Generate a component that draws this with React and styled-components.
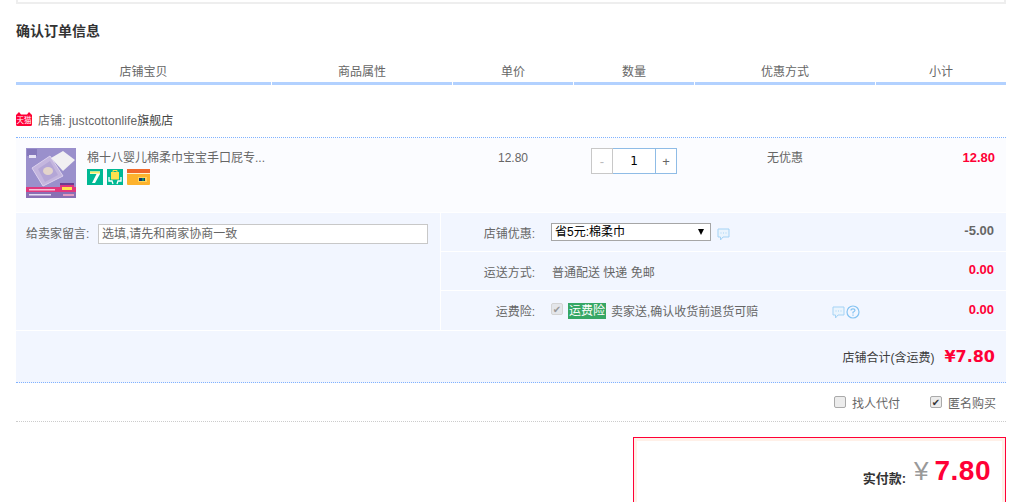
import React from 'react';
import styled, { createGlobalStyle } from 'styled-components';

const GlobalStyle = createGlobalStyle`
    html, body {
        margin: 0;
        height: 502px;
        overflow: hidden;
        background: #fff;
    }
    body {
        font-family: "Liberation Sans", "Noto Sans CJK SC", sans-serif;
        font-size: 12px;
        color: #666;
    }
`;

const Page = styled.div`
    width: 990px;
    margin-left: 16px;
`;

const TopStrip = styled.div`
    height: 2px;
    border: 2px solid #eee;
    border-top: none;
`;

const Title = styled.h2`
    margin: 0;
    padding-top: 16px;
    height: 38px;
    line-height: 22px;
    font-size: 14px;
    font-weight: bold;
    color: #333;
    box-sizing: content-box;
`;

const HeadRow = styled.div`
    display: flex;
    gap: 1px;
    margin-top: 4px;
`;

const HeadCell = styled.div`
    width: ${p => p.$w}px;
    height: 20px;
    line-height: 20px;
    text-align: center;
    color: #666;
    border-bottom: 3px solid #b2d1ff;
`;

const ShopRow = styled.div`
    display: flex;
    align-items: center;
    height: 53px;
    padding-top: 17px;
    padding-bottom: 1px;
    box-sizing: border-box;
    border-bottom: 1px dotted #80b2ff;
    color: #444;
`;

const ShopName = styled.span`
    margin-left: 6px;
    span { color: #666; letter-spacing: 0.1px; }
`;

const ProductRow = styled.div`
    display: flex;
    height: 74px;
    background: #fbfcff;
`;

const ProductCell = styled.div`
    width: ${p => p.$w}px;
    margin-left: ${p => p.$ml || 0}px;
    padding-top: 10px;
    padding-right: ${p => p.$pr || 0}px;
    box-sizing: border-box;
    text-align: ${p => p.$align || 'center'};
    color: #666;
    line-height: 20px;
`;

const SubTotal = styled.span`
    font-size: 13px;
    font-weight: bold;
    color: #ff0036;
`;

const GoodsCell = styled.div`
    display: flex;
    width: 437px;
    padding: 10px 0 0 10px;
    box-sizing: border-box;
`;

const GoodsInfo = styled.div`
    margin-left: 11px;
`;

const GoodsTitle = styled.div`
    line-height: 20px;
    color: #666;
`;

const BadgeRow = styled.div`
    display: flex;
    gap: 4px;
    margin-top: 1px;
`;

const Stepper = styled.div`
    display: flex;
    width: 86px;
    height: 26px;
    margin: 0 auto;
`;

const StepButton = styled.button`
    width: 22px;
    padding: 0;
    border: 1px solid ${p => p.$disabled ? '#c8c8c8' : '#8fbce6'};
    background: #fff;
    color: ${p => p.$disabled ? '#bbb' : '#666'};
    font: 13px "Liberation Sans", sans-serif;
`;

const StepInput = styled.input`
    width: 42px;
    padding: 0;
    box-sizing: border-box;
    border: 1px solid #8fbce6;
    border-left: none;
    border-right: none;
    background: #fff;
    text-align: center;
    color: #000;
    font: 12px "DejaVu Sans", sans-serif;
    outline: none;
`;

const InfoBlock = styled.div`
    display: flex;
    margin-top: 1px;
    background: #f2f6ff;
`;

const MemoPanel = styled.div`
    display: flex;
    align-items: flex-start;
    width: 425px;
    padding: 11px 0 0 10px;
    box-sizing: border-box;
    border-right: 1px solid #fff;
`;

const MemoLabel = styled.label`
    width: 72px;
    line-height: 20px;
    color: #666;
`;

const MemoInput = styled.input`
    width: 330px;
    height: 20px;
    padding: 0 3px;
    box-sizing: border-box;
    border: 1px solid #c8c8c8;
    background: #fff;
    font: 12px "Liberation Sans", "Noto Sans CJK SC", sans-serif;
    color: #666;
    outline: none;
    &::placeholder { color: #666; opacity: 1; }
`;

const OptionsPanel = styled.div`
    flex: 1;
`;

const OptionRow = styled.div`
    display: flex;
    align-items: center;
    height: 39px;
    padding-right: 12px;
    box-sizing: border-box;
    border-bottom: ${p => p.$last ? 'none' : '1px solid #fff'};
`;

const OptionLabel = styled.div`
    width: 95px;
    padding-right: 1px;
    box-sizing: border-box;
    text-align: right;
    color: #666;
`;

const OptionValue = styled.div`
    flex: 1;
    display: flex;
    align-items: center;
    margin-left: 15px;
    color: #666;
`;

const PlainValue = styled.span`
    margin-left: 1px;
`;

const Amount = styled.div`
    font-size: 13px;
    font-weight: bold;
    color: ${p => p.$muted ? '#666' : '#ff0036'};
    margin-top: -3px;
`;

const SelectWrap = styled.div`
    position: relative;
    width: 160px;
    height: 18px;
    &::after {
        content: "";
        position: absolute;
        right: 7px;
        top: 6px;
        border-left: 3.5px solid transparent;
        border-right: 3.5px solid transparent;
        border-top: 6px solid #000;
    }
`;

const CouponSelect = styled.select`
    appearance: none;
    display: block;
    width: 100%;
    height: 100%;
    padding: 0 3px;
    box-sizing: border-box;
    border: 1px solid #a6a6a6;
    border-radius: 0;
    background: #fff;
    color: #000;
    font: 12px "Liberation Sans", "Noto Sans CJK SC", sans-serif;
`;

const Tag = styled.span`
    display: inline-block;
    width: 38px;
    height: 16px;
    line-height: 16px;
    margin: 0 5px;
    background: #36a765;
    color: #fff;
    text-align: center;
`;

const Check = styled.input.attrs({ type: 'checkbox' })`
    appearance: none;
    position: relative;
    flex: none;
    width: 12px;
    height: 12px;
    margin: ${p => p.$dim ? '-4px' : '0'} 0 0;
    border: 1px solid ${p => p.$dim ? '#d4d4d4' : '#aaa'};
    border-radius: 2px;
    background: ${p => p.$dim ? '#e4e6ea' : '#ececec'};
    &:checked::after {
        content: "✔";
        position: absolute;
        inset: 0;
        text-align: center;
        font: 10px/11px "DejaVu Sans", sans-serif;
        color: ${p => p.$dim ? '#999' : '#333'};
    }
`;

const TotalRow = styled.div`
    display: flex;
    justify-content: flex-end;
    align-items: center;
    height: 52px;
    margin-top: 1px;
    padding-right: 11px;
    box-sizing: border-box;
    border-bottom: 1px dotted #80b2ff;
    background: #f2f6ff;
    color: #3c3c3c;
`;

const TotalPrice = styled.span`
    margin-left: 10px;
    font-family: "DejaVu Sans", sans-serif;
    font-size: 16px;
    font-weight: bold;
    color: #ff0036;
`;

const ExtraRow = styled.div`
    display: flex;
    justify-content: flex-end;
    gap: 30px;
    height: 39px;
    padding-right: 10px;
    box-sizing: border-box;
    border-bottom: 1px dotted #ccc;
`;

const ExtraItem = styled.label`
    display: flex;
    align-items: center;
    gap: 6px;
    color: #666;
`;

const PayBox = styled.div`
    display: flex;
    justify-content: flex-end;
    align-items: flex-start;
    width: 373px;
    height: 65px;
    margin: 15px 0 0 auto;
    padding: 17px 14px 0 0;
    box-sizing: border-box;
    border: 1px solid #ff0036;
    border-bottom: none;
    box-shadow: inset 3px 3px 0 #fff0e8, inset -3px 0 0 #fff0e8;
`;

const PayLabel = styled.span`
    margin-top: 13px;
    font-size: 13px;
    font-weight: bold;
    color: #333;
`;

const PayYen = styled.span`
    margin: 1px 6px 0 8px;
    font-size: 26px;
    line-height: 30px;
    color: #999;
`;

const PayAmount = styled.span`
    font-size: 28px;
    font-weight: bold;
    letter-spacing: 0.5px;
    line-height: 32px;
    color: #ff0036;
`;

const IconWrap = styled.span`
    display: inline-flex;
    margin-left: ${p => p.$ml || 0}px;
    margin-top: ${p => p.$mt || 0}px;
`;

const columns = [
    ['店铺宝贝', 255],
    ['商品属性', 180],
    ['单价', 120],
    ['数量', 120],
    ['优惠方式', 180],
    ['小计', 130],
];

const TmallIcon = () => (
    <svg width="16" height="14" viewBox="0 0 16 14">
        <path d="M0 3 L3 0 L5 2.5 H11 L13 0 L16 3 V12.5 Q16 14 14.5 14 H1.5 Q0 14 0 12.5 Z" fill="#ff0036" />
        <text x="8" y="11" textAnchor="middle" fontSize="7.5" fill="#fff" fontFamily="Noto Sans CJK SC, sans-serif">天猫</text>
    </svg>
);

const GoodsImage = () => (
    <svg width="50" height="50" viewBox="0 0 50 50">
        <rect width="50" height="50" fill="#9a90cc" />
        <rect x="1" y="1" width="10" height="7" fill="#8478bb" />
        <rect x="3" y="7" width="7" height="3" fill="#e8e4f5" />
        <path d="M6 20 L24 8 L37 28 L17 38 Z" fill="#c4b6de" stroke="#dcd2ee" strokeWidth="1" />
        <path d="M12 21 L24 13 L32 27 L19 34 Z" fill="#b4a6d6" />
        <ellipse cx="22" cy="23" rx="5" ry="4" fill="#e3d4cb" />
        <path d="M25 10 L37 3 L49 12 L37 23 Z" fill="#f1f0f2" />
        <rect x="0" y="39" width="50" height="5" fill="#e0387e" />
        <rect x="34" y="36" width="14" height="8" fill="#e0387e" />
        <rect x="36" y="39" width="10" height="3" fill="#ffe14d" />
        <rect x="34" y="35" width="14" height="2" fill="#6d3c8f" />
        <rect x="3" y="41" width="26" height="1.5" fill="#f5c3d8" />
        <rect x="0" y="44" width="50" height="6" fill="#8a6fb4" />
        <rect x="3" y="46" width="22" height="1.5" fill="#e6ddf2" />
        <rect x="37" y="46" width="11" height="2" fill="#e49ac0" />
    </svg>
);

const SevenBadge = () => (
    <svg width="16" height="16" viewBox="0 0 16 16">
        <rect width="16" height="16" fill="#00b894" />
        <path d="M3 2.5 H13 V5 L8 14 H5 L9.5 5 H3 Z" fill="#fff" />
        <rect x="3" y="2.5" width="10" height="2" fill="#f4ef6a" />
    </svg>
);

const BagBadge = () => (
    <svg width="16" height="16" viewBox="0 0 16 16">
        <rect width="16" height="16" fill="#00b894" />
        <rect x="4" y="3" width="8" height="7.5" fill="#ffe14d" />
        <path d="M6 3 V1.5 H10 V3" stroke="#ffe14d" fill="none" />
        <path d="M2 8 V12 H5 L6 15 M14 8 V12 H11 L10 15" stroke="#fff" strokeWidth="1.3" fill="none" />
    </svg>
);

const CardBadge = () => (
    <svg width="23" height="16" viewBox="0 0 23 16">
        <rect width="23" height="16" rx="1" fill="#fdb22d" />
        <rect width="23" height="4" fill="#f0672a" />
        <rect y="4" width="23" height="1" fill="#fff1c9" />
        <rect x="11" y="8" width="9" height="5" fill="#ffd35c" />
        <rect x="12" y="9" width="6" height="3" fill="#12356e" />
        <rect x="15" y="9" width="2" height="3" fill="#0b8a6a" />
    </svg>
);

const BubbleIcon = () => (
    <svg width="13" height="13" viewBox="0 0 13 13">
        <path d="M1 1 H12 V9 H6 L3.5 12 V9 H1 Z" fill="#eaf4fd" stroke="#a5d3f5" strokeWidth="1" />
        <path d="M3.5 5 H4.5 M6 5 H7 M8.5 5 H9.5" stroke="#a5d3f5" strokeWidth="1" />
    </svg>
);

const HelpIcon = () => (
    <svg width="14" height="14" viewBox="0 0 14 14">
        <circle cx="7" cy="7" r="6" fill="#f2f6ff" stroke="#85c3f2" strokeWidth="1.2" />
        <path d="M5 5.5 Q5 3.8 7 3.8 Q9 3.8 9 5.3 Q9 6.4 7 7.2 V8.4 M7 9.5 V10.7" stroke="#85c3f2" strokeWidth="1.2" fill="none" />
    </svg>
);

const App = () => (
    <Page>
        <GlobalStyle />
        <TopStrip />
        <Title>确认订单信息</Title>
        <HeadRow>
            {columns.map(([name, w]) => (
                <HeadCell key={name} $w={w}>{name}</HeadCell>
            ))}
        </HeadRow>
        <ShopRow>
            <TmallIcon />
            <ShopName>
                <span>店铺: justcottonlife</span>旗舰店
            </ShopName>
        </ShopRow>
        <ProductRow>
            <GoodsCell>
                <GoodsImage />
                <GoodsInfo>
                    <GoodsTitle>棉十八婴儿棉柔巾宝宝手口屁专...</GoodsTitle>
                    <BadgeRow>
                        <SevenBadge />
                        <BagBadge />
                        <CardBadge />
                    </BadgeRow>
                </GoodsInfo>
            </GoodsCell>
            <ProductCell $w={120}>12.80</ProductCell>
            <ProductCell $w={120} $ml={1}>
                <Stepper>
                    <StepButton $disabled>-</StepButton>
                    <StepInput defaultValue="1" />
                    <StepButton>+</StepButton>
                </Stepper>
            </ProductCell>
            <ProductCell $w={180} $ml={1}>无优惠</ProductCell>
            <ProductCell $w={131} $align="right" $pr={11}>
                <SubTotal>12.80</SubTotal>
            </ProductCell>
        </ProductRow>
        <InfoBlock>
            <MemoPanel>
                <MemoLabel>给卖家留言:</MemoLabel>
                <MemoInput placeholder="选填,请先和商家协商一致" />
            </MemoPanel>
            <OptionsPanel>
                <OptionRow>
                    <OptionLabel>店铺优惠:</OptionLabel>
                    <OptionValue>
                        <SelectWrap>
                            <CouponSelect defaultValue="5">
                                <option value="5">省5元:棉柔巾</option>
                            </CouponSelect>
                        </SelectWrap>
                        <IconWrap $ml={6} $mt={4}><BubbleIcon /></IconWrap>
                    </OptionValue>
                    <Amount $muted>-5.00</Amount>
                </OptionRow>
                <OptionRow>
                    <OptionLabel>运送方式:</OptionLabel>
                    <OptionValue><PlainValue>普通配送 快递 免邮</PlainValue></OptionValue>
                    <Amount>0.00</Amount>
                </OptionRow>
                <OptionRow $last>
                    <OptionLabel>运费险:</OptionLabel>
                    <OptionValue>
                        <Check $dim defaultChecked disabled />
                        <Tag>运费险</Tag>
                        卖家送,确认收货前退货可赔
                        <IconWrap $ml={74} $mt={3}><BubbleIcon /></IconWrap>
                        <IconWrap $ml={1} $mt={3}><HelpIcon /></IconWrap>
                    </OptionValue>
                    <Amount>0.00</Amount>
                </OptionRow>
            </OptionsPanel>
        </InfoBlock>
        <TotalRow>
            店铺合计(含运费)
            <TotalPrice>¥7.80</TotalPrice>
        </TotalRow>
        <ExtraRow>
            <ExtraItem><Check />找人代付</ExtraItem>
            <ExtraItem><Check defaultChecked />匿名购买</ExtraItem>
        </ExtraRow>
        <PayBox>
            <PayLabel>实付款:</PayLabel>
            <PayYen>¥</PayYen>
            <PayAmount>7.80</PayAmount>
        </PayBox>
    </Page>
);

export default App;
